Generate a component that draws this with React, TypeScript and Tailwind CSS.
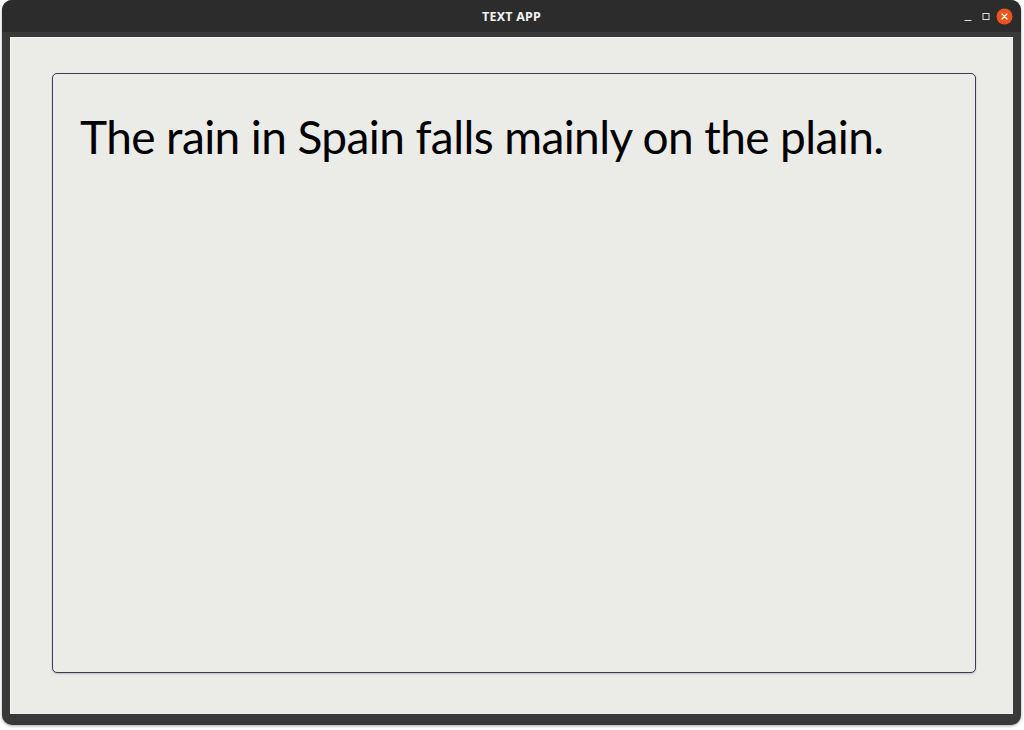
export default function App() {
  return (
    <div className="h-[730px] w-[1024px] bg-white pl-[2px] pr-[3px] pt-0 pb-[5px]">
      <div className="flex h-full flex-col overflow-hidden rounded-[10px] bg-[#393939] shadow-[0_1px_3px_rgba(0,0,0,0.35)]">
        {/* title bar */}
        <div className="relative flex h-[32px] shrink-0 items-center justify-center bg-[#2c2c2c] pt-[2px]">
          <span className="font-['Noto_Sans',sans-serif] text-[12.5px] font-bold tracking-[0.2px] text-[#f2f2f2]">
            TEXT APP
          </span>
          <div className="absolute right-[8px] top-[8px] flex items-center">
            <svg width="8" height="16" viewBox="0 0 8 16">
              <rect x="0.5" y="11" width="7" height="1" fill="#e0e0e0" />
            </svg>
            <svg width="8" height="16" viewBox="0 0 8 16" className="ml-[10px]">
              <rect x="1" y="4.5" width="6" height="6" fill="none" stroke="#e0e0e0" strokeWidth="1" />
            </svg>
            <svg width="17" height="17" viewBox="0 0 17 17" className="ml-[6px]">
              <circle cx="8.5" cy="8.5" r="8" fill="#e9541f" />
              <path d="M6 6 L11 11 M11 6 L6 11" stroke="#fff" strokeWidth="1.2" strokeLinecap="round" />
            </svg>
          </div>
        </div>
        <div className="flex flex-1 flex-col px-[8px] pb-[11px] pt-[5px]">
          <div className="flex flex-1 flex-col border-t border-l border-[#f7f7f5] bg-[#ebebe7] pb-[41px] pl-[41px] pr-[37px] pt-[35px]">
            <div className="flex-1 rounded-[5px] border border-[#3d3b57] bg-[#ebebe7] px-[27px] pt-[35px] shadow-[0_1px_2px_rgba(0,0,0,0.2)]">
              <p className="font-['Lato',sans-serif] text-[46px] font-normal leading-[1.2] tracking-[-0.6px] text-black">
                The rain in Spain falls mainly on the plain.
              </p>
            </div>
          </div>
        </div>
      </div>
    </div>
  );
}
